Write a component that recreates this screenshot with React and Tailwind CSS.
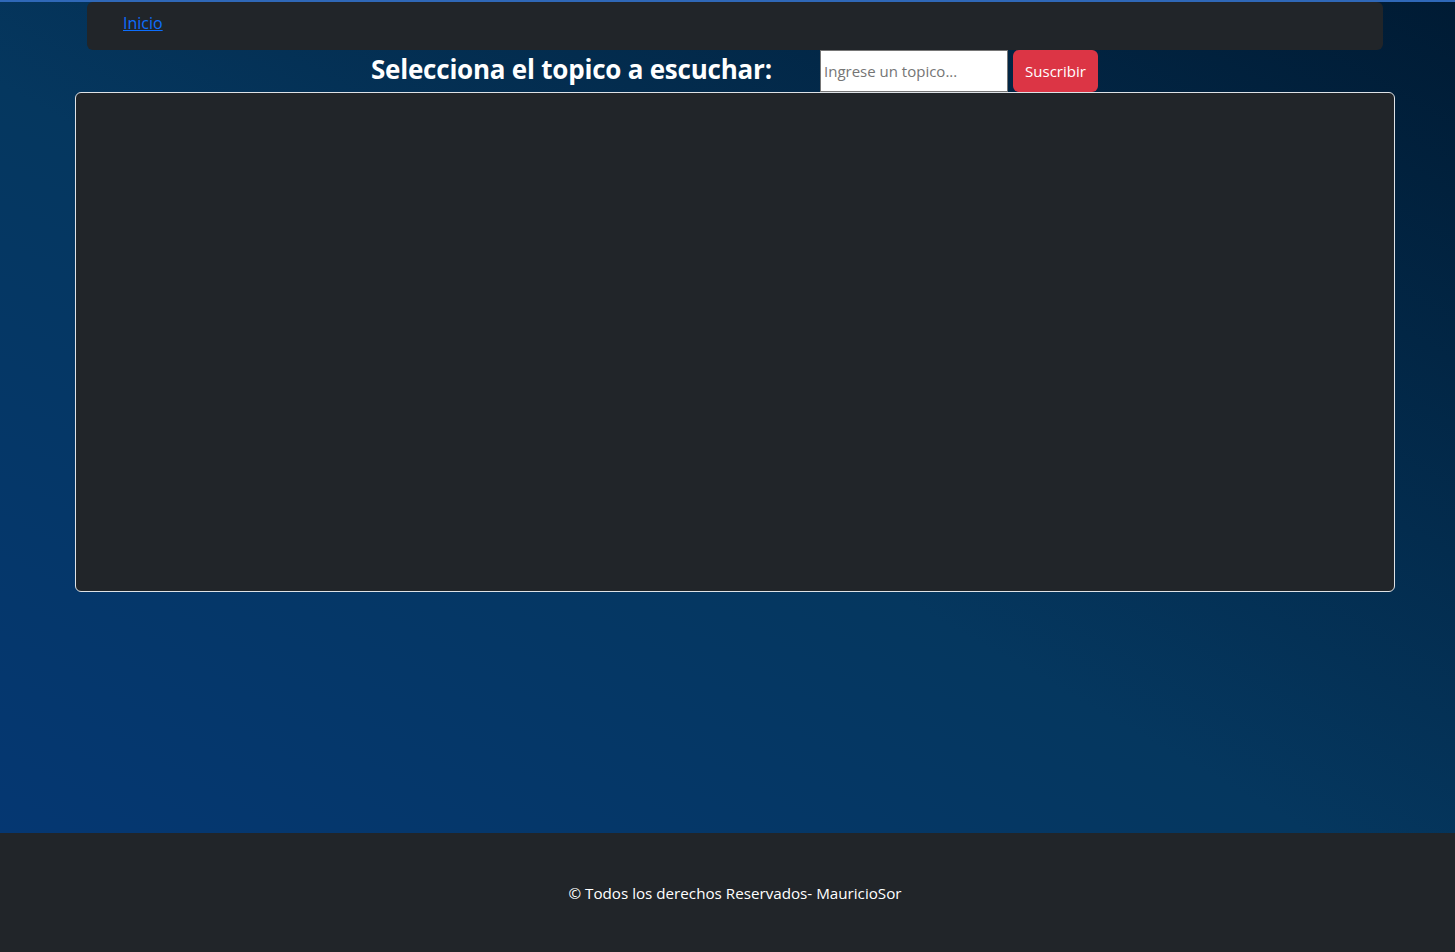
export default function App() {
  return (
    <div className="min-h-screen flex flex-col font-['Open_Sans',sans-serif]">
      {/* Main area with gradient */}
      <div className="flex-1 h-[833px] border-t-2 border-[#2f68b8] bg-[linear-gradient(to_top_right,#053772_0%,#05375f_45%,#001b34_100%)]">
        <div className="w-[1320px] ml-[75px]">
          {/* Navbar */}
          <nav className="mx-3 h-[48px] bg-[#212529] rounded-md flex items-center px-9">
            <a href="#" className="text-[#0d6efd] underline text-[16px] -mt-[7px]">
              Inicio
            </a>
          </nav>

          {/* Topic selector */}
          <div className="flex items-stretch h-[42px]">
            <h2 className="ml-[296px] w-[449px] text-white font-bold text-[26px] tracking-[-0.22px] leading-[38px]">
              Selecciona el topico a escuchar:
            </h2>
            <input
              type="text"
              placeholder="Ingrese un topico..."
              className="w-[188px] h-[42px] bg-white border border-[#767676] px-[3px] text-[15px] text-black placeholder:text-[#757575] outline-none"
            />
            <button className="ml-[5px] w-[85px] h-[42px] bg-[#dc3545] text-white text-[15px] rounded-md">
              Suscribir
            </button>
          </div>

          {/* Messages box */}
          <div className="h-[500px] bg-[#212529] border border-[#dee2e6] rounded-md"></div>
        </div>
      </div>

      {/* Footer */}
      <footer className="h-[119px] bg-[#212529] flex items-center justify-center pl-[15px]">
        <p className="text-white text-[15.2px] mt-[2px]">© Todos los derechos Reservados- MauricioSor</p>
      </footer>
    </div>
  );
}
